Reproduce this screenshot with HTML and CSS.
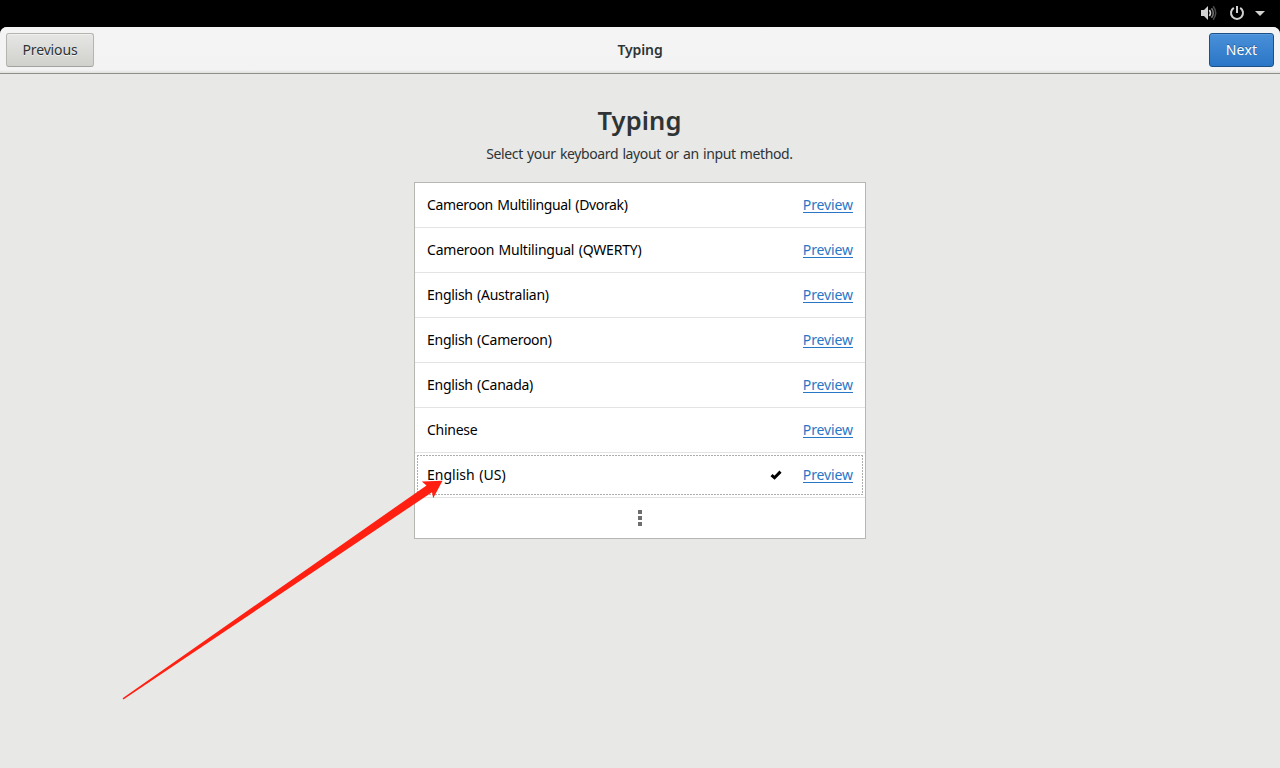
FILE: index.html
```html
<!DOCTYPE html>
<html lang="en">
<head>
<meta charset="utf-8">
<title>Typing</title>
<link rel="stylesheet" href="styles.css">
</head>
<body>
<div class="topbar">
  <svg class="tray" width="80" height="27" viewBox="1200 0 80 27">
    <path d="M1201 10h3l4-4v14l-4-4h-3z" fill="#d2d2d0"/>
    <path d="M1209.4 10q2.2 3 0 6" fill="none" stroke="#d2d2d0" stroke-width="1.6"/>
    <path d="M1211.5 8.2q3.6 4.8 0 9.6" fill="none" stroke="#777" stroke-width="1.5"/>
    <path d="M1213.2 6.3q5 6.7 0 13.4" fill="none" stroke="#4c4c4c" stroke-width="1.5"/>
    <path d="M1233.8 7.8a6 6 0 1 0 6.4 0M1237 6v7" fill="none" stroke="#d2d2d0" stroke-width="2"/>
    <path d="M1255 11h10l-5 5z" fill="#d2d2d0"/>
  </svg>
</div>
<div class="window">
  <header class="header">
    <button class="btn prev">Previous</button>
    <div class="header-title">Typing</div>
    <button class="btn next">Next</button>
  </header>
  <main class="content">
    <h1 class="heading">Typing</h1>
    <p class="subtitle">Select your keyboard layout or an input method.</p>
    <div class="list">
      <div class="row"><span class="name dvorak">Cameroon Multilingual (Dvorak)</span><a class="preview">Preview</a></div>
      <div class="row"><span class="name qwerty">Cameroon Multilingual (QWERTY)</span><a class="preview">Preview</a></div>
      <div class="row"><span class="name">English (Australian)</span><a class="preview">Preview</a></div>
      <div class="row"><span class="name">English (Cameroon)</span><a class="preview">Preview</a></div>
      <div class="row"><span class="name">English (Canada)</span><a class="preview">Preview</a></div>
      <div class="row"><span class="name">Chinese</span><a class="preview">Preview</a></div>
      <div class="row selected"><span class="name us">English (US)</span>
        <svg class="check" width="12" height="10" viewBox="0 0 12 10"><path d="M1.5 5.1l3 2.6L10.5 1.6" fill="none" stroke="#000" stroke-width="3"/></svg>
        <a class="preview">Preview</a></div>
      <div class="more"><svg width="4" height="16" viewBox="0 0 4 16"><path d="M0 0h4v4H0zM0 6h4v4H0zM0 12h4v4H0z" fill="#6e6e6e"/></svg></div>
    </div>
  </main>
</div>
<svg class="arrow" width="1280" height="768" viewBox="0 0 1280 768"><path d="M122.6 698.3L426.5 485.4L421.8 481.6L442.5 480.8L433.2 498.3L432 492.2L123.4 699.6z" fill="#ff2012"/></svg>
</body>
</html>
```
FILE: styles.css
```css
* { box-sizing: border-box; }
body {
  margin: 0;
  height: 768px;
  overflow: hidden;
  background: #000;
  color: #2e3436;
  font: 14px/20px "Noto Sans", "Open Sans", sans-serif;
  white-space: nowrap;
}
.topbar { height: 27px; display: flex; justify-content: flex-end; }
.tray { display: block; }
.window { height: 741px; background: #e8e8e6; border-radius: 7px 7px 0 0; overflow: hidden; }
.header {
  height: 47px;
  padding: 0 6px;
  display: grid;
  grid-template-columns: 88px 1fr 88px;
  align-items: center;
  background: linear-gradient(#f4f4f4, #f3f3f3 43px, #dededc 46px);
  border-bottom: 1px solid #8f8f8a;
}
.header-title { font-weight: 600; text-align: center; letter-spacing: -0.1px; }
.btn {
  height: 34px;
  padding: 0;
  font: inherit;
  border-radius: 3px;
}
.prev {
  color: #2e3436;
  letter-spacing: -0.15px;
  background: linear-gradient(#e6e6e4, #d0d0cd);
  border: 1px solid #b4b4b0;
  border-bottom-color: #a2a29e;
  box-shadow: inset 0 1px #f0f0ef;
  text-shadow: 0 1px #f2f2f1;
}
.next {
  width: 65px;
  justify-self: end;
  color: #fff;
  letter-spacing: 0.2px;
  background: linear-gradient(#4a90d9, #2a76c6);
  border: 1px solid #1c5187;
  box-shadow: inset 0 1px #5b9cdf;
  text-shadow: 0 -1px #235f9f;
}
.content { display: flex; flex-direction: column; align-items: center; padding-top: 28px; }
.heading { margin: 0 1px 0 0; font-size: 25.5px; line-height: 36px; font-weight: 600; letter-spacing: 0.1px; }
.subtitle { margin: 6px 1px 18px 0; letter-spacing: -0.38px; word-spacing: 1px; }
.list { width: 452px; border: 1px solid #b6b6b3; background: #fff; color: #000; }
.row { height: 45px; display: flex; align-items: center; padding: 0 12px; border-bottom: 1px solid #e3e3e3; position: relative; }
.name { flex: 1; letter-spacing: -0.27px; word-spacing: 1px; }
.dvorak { letter-spacing: -0.36px; }
.qwerty { letter-spacing: -0.21px; }
.us { letter-spacing: 0; }
.preview { color: #2a76c6; border-bottom: 1px solid #2a76c6; line-height: 16px; height: 16px; margin-bottom: 1px; letter-spacing: -0.1px; }
.check { margin-right: 21px; }
.selected::after {
  content: "";
  position: absolute;
  inset: 2px;
  background:
    repeating-linear-gradient(90deg, #adadad 0 2px, #fff 2px 3px) top / 100% 1px no-repeat,
    repeating-linear-gradient(90deg, #adadad 0 2px, #fff 2px 3px) bottom / 100% 1px no-repeat,
    repeating-linear-gradient(#adadad 0 2px, #fff 2px 3px) left / 1px 100% no-repeat,
    repeating-linear-gradient(#adadad 0 2px, #fff 2px 3px) right / 1px 100% no-repeat;
}
.more { height: 40px; display: flex; align-items: center; justify-content: center; }
.more svg { display: block; }
.arrow { position: absolute; left: 0; top: 0; pointer-events: none; }
```
